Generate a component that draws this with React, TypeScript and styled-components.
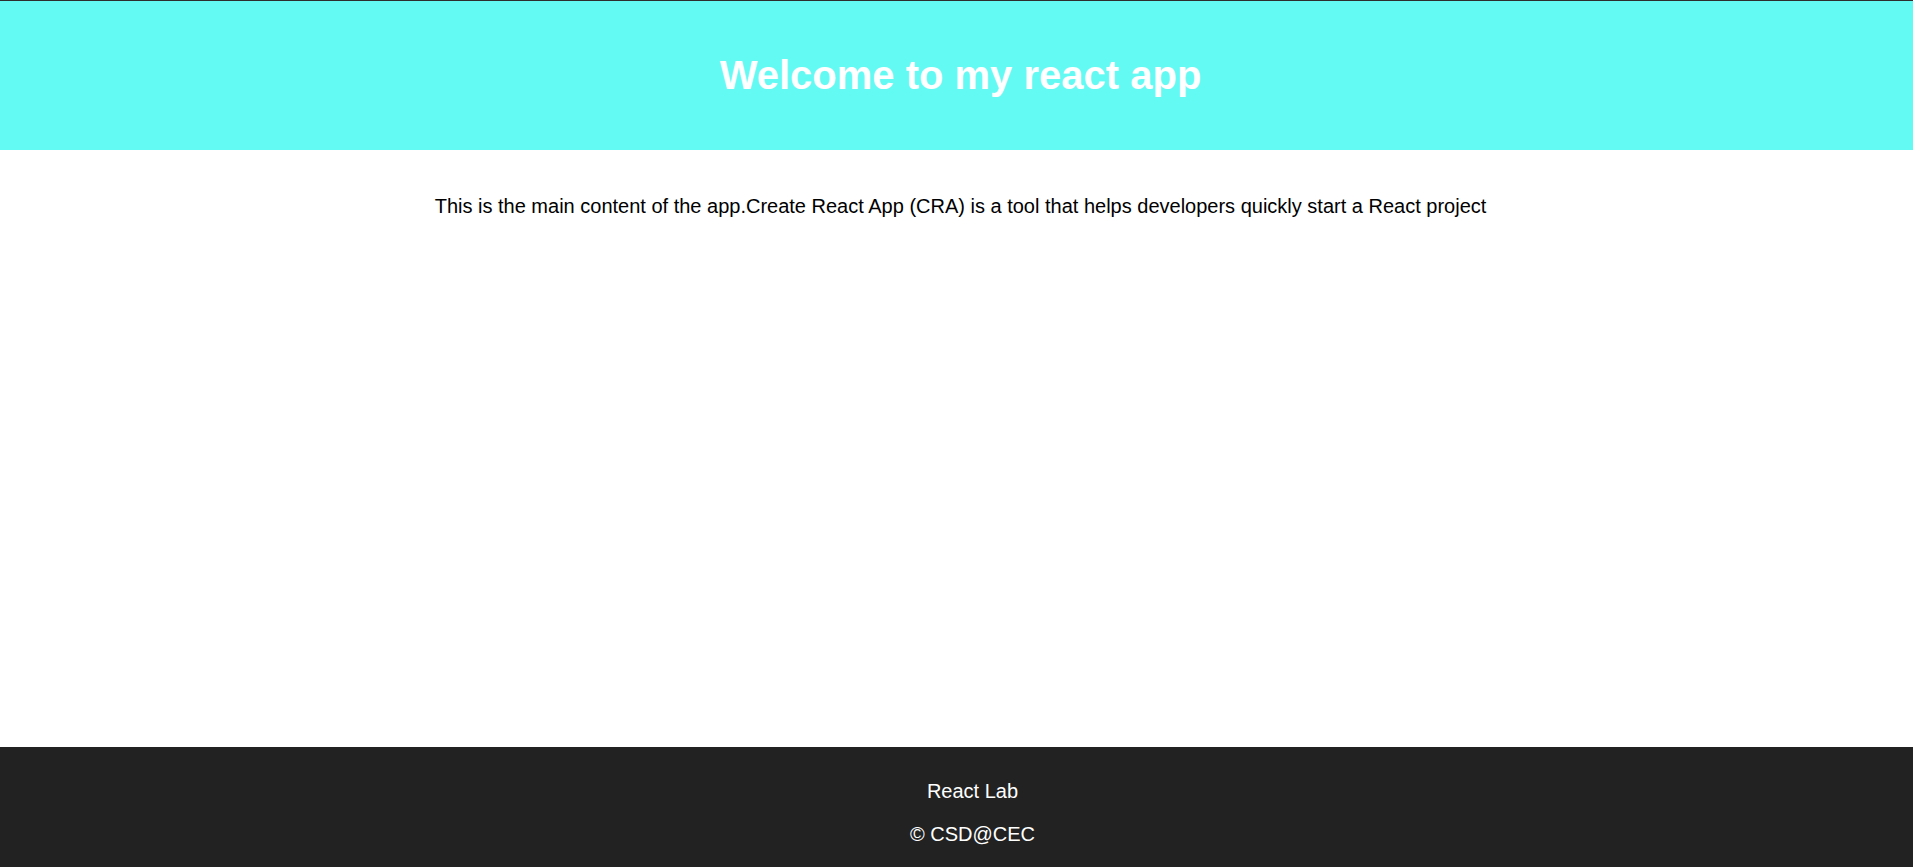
import styled, { createGlobalStyle } from 'styled-components';

const GlobalStyle = createGlobalStyle`
  html, body {
    margin: 0;
    padding: 0;
  }
  body {
    font-family: "Liberation Sans", Arial, sans-serif;
    background: #ffffff;
  }
`;

const Page = styled.div`
  display: flex;
  flex-direction: column;
  min-height: 100vh;
`;

const Header = styled.header`
  box-sizing: border-box;
  height: 150px;
  border-top: 1px solid #2e2e2e;
  background-color: #64faf4;
  padding-left: 8px;
  display: flex;
  align-items: center;
  justify-content: center;
`;

const Title = styled.h1`
  margin: 0;
  color: #ffffff;
  font-size: 40px;
  font-weight: 700;
`;

const Main = styled.main`
  flex: 1;
  padding: 45px 20px 34px 28px;
  text-align: center;
`;

const Content = styled.p`
  margin: 0;
  font-size: 20px;
  color: #000000;
`;

const Footer = styled.footer`
  box-sizing: border-box;
  height: 120px;
  background-color: #222222;
  color: #ffffff;
  text-align: center;
  padding: 33px 0 0 32px;
`;

const FooterLine = styled.p`
  margin: 0 0 20px;
  font-size: 20px;
`;

const App = () => {
  return (
    <Page>
      <GlobalStyle />
      <Header>
        <Title>Welcome to my react app</Title>
      </Header>

      <Main>
        <Content>
          This is the main content of the app.Create React App (CRA) is a tool that helps developers quickly start a React project
        </Content>
      </Main>

      <Footer>
        <FooterLine>React Lab</FooterLine>
        <FooterLine>© CSD@CEC</FooterLine>
      </Footer>
    </Page>
  );
};

export default App;
